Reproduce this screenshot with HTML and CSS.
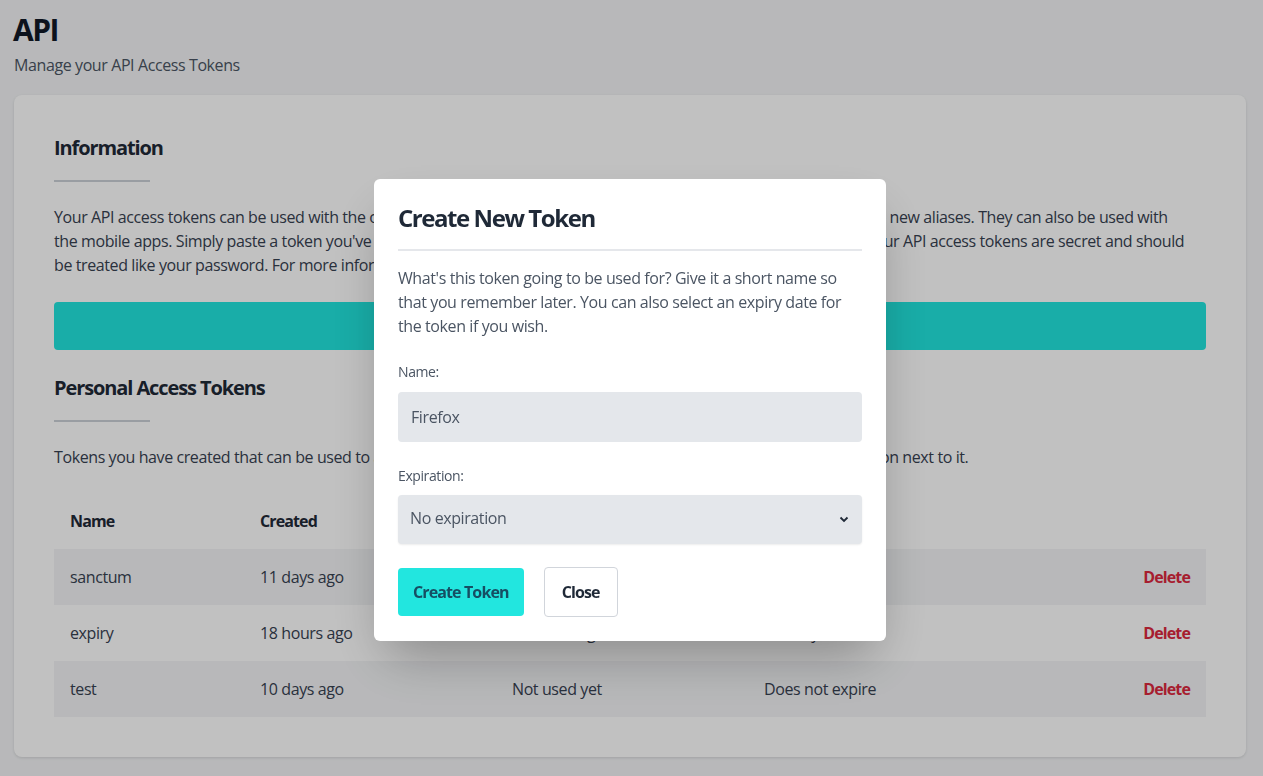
FILE: index.html
```html
<!DOCTYPE html>
<html lang="en">
<head>
<meta charset="utf-8">
<title>API</title>
<link rel="stylesheet" href="styles.css">
</head>
<body>
<div class="page">
  <h1 class="page-title">API</h1>
  <p class="page-sub">Manage your API Access Tokens</p>

  <section class="card">
    <h2 class="section-title">Information</h2>
    <div class="bar"></div>
    <p class="text">Your API access tokens can be used with the open-source browser extension on Firefox, Chrome, or Safari to generate new aliases. They can also be used with the&nbsp;mobile apps. Simply paste a token you've created into the browser extension or the mobile apps to get started. Your API access tokens are secret and should be&nbsp;treated like your password. For more information please see the API documentation.</p>
    <button class="banner-btn">Create New Token</button>

    <h2 class="section-title second">Personal Access Tokens</h2>
    <div class="bar"></div>
    <p class="text">Tokens you have created that can be used to access the API. To revoke an access token simply click on the delete button next to it.</p>

    <table class="tokens">
      <thead>
        <tr><th>Name</th><th>Created</th><th>Last Used</th><th>Expires At</th><th></th></tr>
      </thead>
      <tbody>
        <tr class="striped"><td>sanctum</td><td>11 days ago</td><td>11 days ago</td><td>Does not expire</td><td class="del">Delete</td></tr>
        <tr><td>expiry</td><td>18 hours ago</td><td>18 hours ago</td><td>in 6 days</td><td class="del">Delete</td></tr>
        <tr class="striped"><td>test</td><td>10 days ago</td><td>Not used yet</td><td>Does not expire</td><td class="del">Delete</td></tr>
      </tbody>
    </table>
  </section>
</div>

<div class="overlay">
  <div class="modal">
    <h2 class="modal-title">Create New Token</h2>
    <div class="modal-rule"></div>
    <p class="modal-text">What's this token going to be used for? Give it a short name so that you remember later. You can also select an expiry date for the token if you wish.</p>
    <label class="field-label">Name:</label>
    <div class="input">Firefox</div>
    <label class="field-label">Expiration:</label>
    <div class="select">
      <span>No expiration</span>
      <svg class="chev" width="10" height="7" viewBox="0 0 10 7"><path d="M1.5 1.5 L5 5 L8.5 1.5" fill="none" stroke="#1f2937" stroke-width="1.8"/></svg>
    </div>
    <div class="actions">
      <button class="btn-primary">Create Token</button>
      <button class="btn-secondary">Close</button>
    </div>
  </div>
</div>
</body>
</html>
```
FILE: styles.css
```css
* { box-sizing: border-box; }
html, body { margin: 0; padding: 0; }
body {
  background: #f3f4f6;
  font-family: "Open Sans", "Noto Sans", sans-serif;
  letter-spacing: -0.025em;
  color: #1f2937;
  width: 1263px;
  height: 776px;
  overflow: hidden;
}
.page {
  padding: 12px 17px 0 14px;
}
.page-title {
  margin: 0;
  font-size: 30px;
  line-height: 36px;
  font-weight: 700;
  letter-spacing: -0.05em;
  color: #111827;
  margin-left: -1px;
}
.page-sub {
  margin: 5px 0 0;
  font-size: 16px;
  line-height: 24px;
  color: #4b5563;
}
.card {
  margin-top: 18px;
  background: #ffffff;
  border-radius: 8px;
  box-shadow: 0 1px 3px rgba(0,0,0,0.12);
  padding: 40px 40px 40px;
}
.section-title {
  margin: 0;
  font-size: 20px;
  line-height: 26px;
  font-weight: 700;
  letter-spacing: -0.055em;
  color: #1f2937;
}
.section-title.second { margin-top: 25px; }
.bar {
  width: 96px;
  height: 2px;
  background: #cbd0d6;
  margin-top: 19px;
}
.text {
  margin: 23px 0 0;
  font-size: 16px;
  line-height: 24px;
  color: #374151;
}
.banner-btn {
  display: block;
  width: 100%;
  height: 48px;
  margin-top: 25px;
  border: 0;
  border-radius: 4px;
  background: #21e5de;
  color: #164e63;
  font-family: inherit;
  font-size: 16px;
  font-weight: 700;
}
.tokens {
  width: 100%;
  margin-top: 24px;
  border-collapse: collapse;
  font-size: 16px;
  color: #374151;
}
.tokens th, .tokens td {
  padding: 16px;
  line-height: 24px;
  text-align: left;
}
.tokens th {
  font-weight: 700;
  letter-spacing: -0.055em;
  color: #1f2937;
}
.tokens th:nth-child(1) { width: 190px; }
.tokens th:nth-child(2) { width: 252px; }
.tokens th:nth-child(3) { width: 252px; }
.tokens tr.striped td { background: #f3f4f6; }
.tokens td.del {
  text-align: right;
  font-weight: 700;
  letter-spacing: -0.055em;
  color: #dc283e;
}

.overlay {
  position: fixed;
  inset: 0;
  background: rgba(0, 0, 0, 0.245);
  display: flex;
  justify-content: center;
  align-items: flex-start;
  padding-top: 179px;
}
.modal {
  width: 512px;
  background: #ffffff;
  border-radius: 6px;
  padding: 24px 24px 24px;
  box-shadow: 0 25px 50px -12px rgba(0,0,0,0.3);
  margin-left: -3px;
}
.modal-title {
  margin: 0;
  font-size: 24px;
  line-height: 30px;
  font-weight: 700;
  letter-spacing: -0.06em;
  color: #1f2937;
}
.modal-rule {
  height: 2px;
  background: #e5e7eb;
  margin-top: 16px;
}
.modal-text {
  margin: 15px 0 0;
  font-size: 16px;
  line-height: 24px;
  color: #4b5563;
}
.field-label {
  display: block;
  margin-top: 24px;
  font-size: 14px;
  line-height: 20px;
  color: #4b5563;
}
.input {
  margin-top: 10px;
  height: 50px;
  border-radius: 4px;
  background: #e4e7eb;
  padding: 0 13px;
  display: flex;
  align-items: center;
  font-size: 16px;
  color: #4b5563;
}
.select {
  margin-top: 9px;
  height: 49px;
  border-radius: 4px;
  background: #e4e7eb;
  box-shadow: 0 1px 2px rgba(0,0,0,0.08);
  padding: 0 13px 3px 12px;
  display: flex;
  align-items: center;
  justify-content: space-between;
  font-size: 16px;
  color: #4b5563;
}
.chev { display: block; margin-top: 3px; }
.actions {
  margin-top: 23px;
  display: flex;
  align-items: center;
  gap: 20px;
}
.btn-primary {
  height: 48px;
  padding: 0 15px;
  border: 0;
  border-radius: 4px;
  background: #22e6df;
  color: #164e63;
  font-family: inherit;
  font-size: 16px;
  font-weight: 700;
  letter-spacing: -0.055em;
}
.btn-secondary {
  height: 50px;
  padding: 0 17px;
  border: 1px solid #d1d5db;
  border-radius: 4px;
  background: #ffffff;
  color: #1f2937;
  font-family: inherit;
  font-size: 16px;
  font-weight: 700;
  letter-spacing: -0.055em;
}
```
